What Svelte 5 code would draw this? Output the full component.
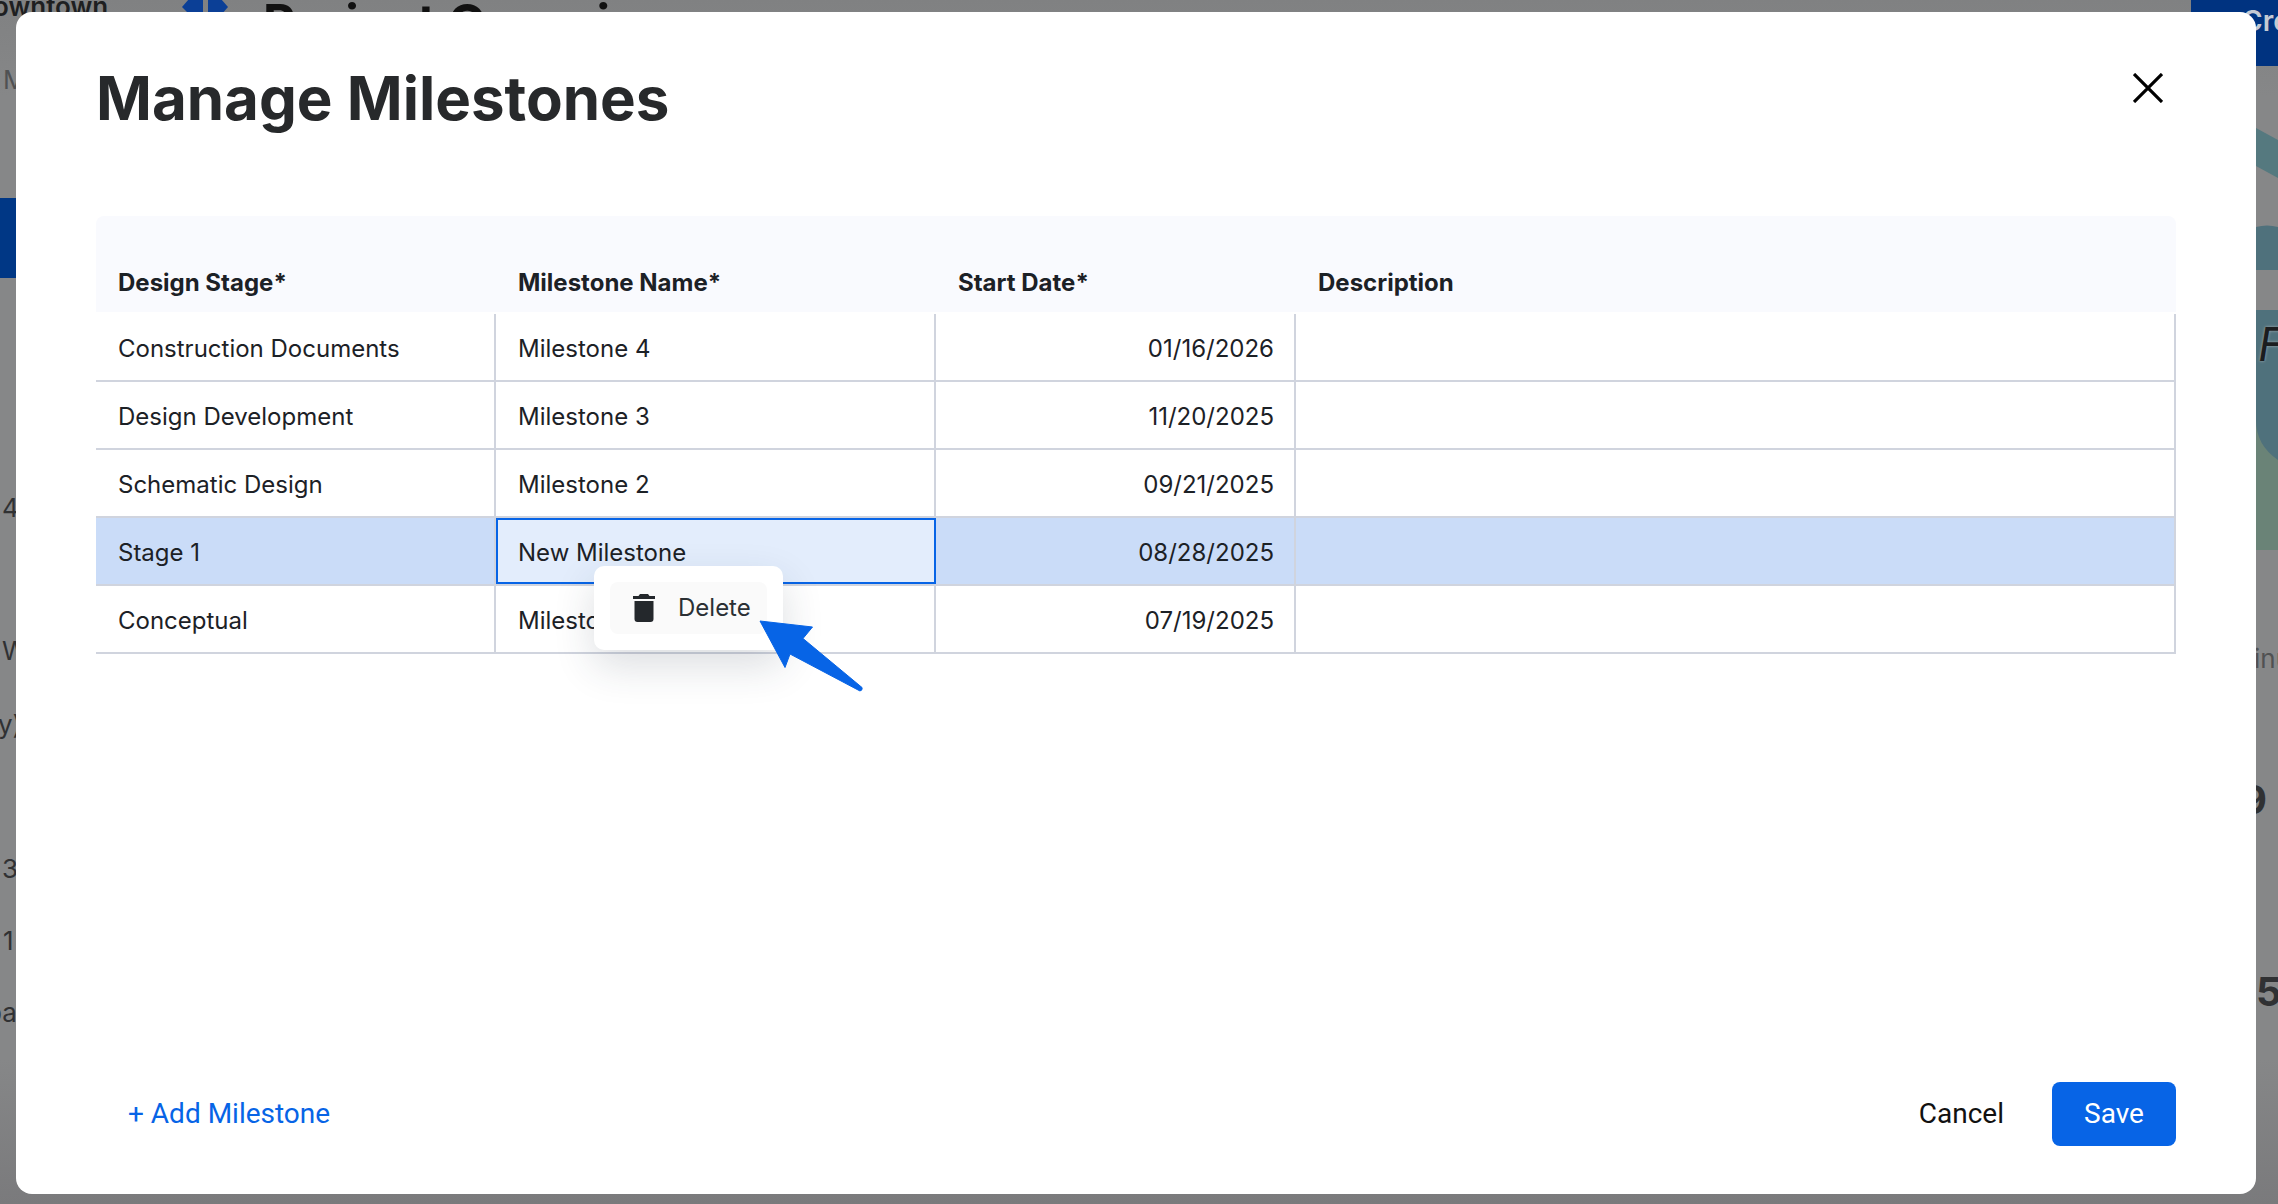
<script>
	const rows = [
		{ stage: "Construction Documents", name: "Milestone 4", date: "01/16/2026" },
		{ stage: "Design Development", name: "Milestone 3", date: "11/20/2025" },
		{ stage: "Schematic Design", name: "Milestone 2", date: "09/21/2025" },
		{ stage: "Stage 1", name: "New Milestone", date: "08/28/2025", selected: true },
		{ stage: "Conceptual", name: "Milestone 1", date: "07/19/2025" },
	];
</script>

<div class="page">
	<!-- the page behind the dimmed overlay, only slivers of it show -->
	<div class="behind">
		<span class="frag town">owntown</span>
		<svg class="logo" viewBox="0 0 46 16" width="46" height="16">
			<path d="M7 0h14v16H8L0 8z" fill="#0b3f96" />
			<path d="M26 0h13l7 8-7 8H26z" fill="#0b3f96" />
		</svg>
		<span class="frag heading">Project Overview</span>
		<div class="navblue"></div>
		<div class="createblue"><span>Create</span></div>
		<svg class="map" viewBox="0 0 22 430" width="22" height="430">
			<path d="M0 8L22 20V58L0 46z" fill="#55797f" />
			<path d="M0 107Q11 104 22 107V150H0z" fill="#4f717c" />
			<path d="M0 190H22V430H0z" fill="#4f717c" />
			<path d="M0 300Q0 325 22 340V430H0z" fill="#6a8377" />
		</svg>
		<span class="frag l1">M</span>
		<span class="frag l2">4</span>
		<span class="frag l3">W</span>
		<span class="frag l4">y)</span>
		<span class="frag l5">3</span>
		<span class="frag l6">1</span>
		<span class="frag l7">pa</span>
		<span class="frag r1">inu</span>
		<span class="frag r2">9</span>
		<span class="frag r3">5,</span>
		<span class="frag r4">F</span>
	</div>

	<div class="modal">
		<header>
			<h1>Manage Milestones</h1>
			<button class="close" aria-label="Close">
				<svg viewBox="0 0 30 30" width="30" height="30"><path d="M1 1l28 28M29 1L1 29" stroke="#000" stroke-width="3.2" fill="none" /></svg>
			</button>
		</header>

		<div class="table">
			<div class="row head">
				<div class="cell">Design Stage*</div>
				<div class="cell">Milestone Name*</div>
				<div class="cell">Start Date*</div>
				<div class="cell">Description</div>
			</div>
			<div class="body">
				{#each rows as row (row.stage)}
					<div class="row" class:selected={row.selected}>
						<div class="cell">{row.stage}</div>
						<div class="cell" class:active={row.selected}>{row.name}</div>
						<div class="cell date">{row.date}</div>
						<div class="cell"></div>
					</div>
				{/each}
			</div>

			<div class="menu">
				<div class="item">
					<svg viewBox="0 0 22 28" width="22" height="28">
						<path d="M7 0h8l1.500 2H22v3H0V2h5.500zM1.500 7h19v18a3 3 0 0 1-3 3h-13a3 3 0 0 1-3-3z" fill="#24282c" />
					</svg>
					<span>Delete</span>
				</div>
			</div>
			<svg class="arrow" viewBox="0 0 104 72" width="104" height="72">
				<path d="M1 1L53.500 7L44 18.500L103 67.500Q104 70 101 71L31 34L26 47.500z" fill="#0764e6" stroke="#0764e6" stroke-width="1" stroke-linejoin="round" />
			</svg>
		</div>

		<footer>
			<button class="add">+ Add Milestone</button>
			<div class="actions">
				<button class="cancel">Cancel</button>
				<button class="save">Save</button>
			</div>
		</footer>
	</div>
</div>

<style>
	:global(body) {
		margin: 0;
		background: #838485;
		overflow: hidden;
	}

	.page {
		position: relative;
		width: 2278px;
		height: 1204px;
		overflow: hidden;
		font-family: Inter, sans-serif;
		color: #1c2126;
	}

	.behind {
		position: absolute;
		inset: 0;
		background: linear-gradient(#808182, #868788 8%, #868788 88%, #7a7a7c);
	}
	.frag {
		position: absolute;
		font-size: 26px;
		line-height: 28px;
		color: #303133;
		white-space: nowrap;
	}
	.town { left: -7px; top: -7px; font-weight: 600; color: #1e1f21; }
	.logo { position: absolute; left: 182px; top: -1px; }
	.heading { left: 263px; top: -6px; font-size: 50px; line-height: 56px; font-weight: 700; color: #111; }
	.navblue { position: absolute; left: 0; top: 198px; width: 16px; height: 80px; background: #003785; }
	.createblue {
		position: absolute;
		left: 2191px;
		top: 0;
		width: 87px;
		height: 66px;
		background: #003380;
		color: #c4cad4;
		font-size: 28px;
		font-weight: 600;
		padding: 4px 0 0 51px;
		box-sizing: border-box;
		white-space: nowrap;
		overflow: hidden;
	}
	.map { position: absolute; left: 2256px; top: 120px; }
	.l1 { left: 3px; top: 66px; color: #505153; }
	.l2 { left: 2px; top: 494px; }
	.l3 { left: 2px; top: 637px; }
	.l4 { left: -2px; top: 711px; }
	.l5 { left: 2px; top: 855px; }
	.l6 { left: 3px; top: 927px; }
	.l7 { left: -14px; top: 999px; }
	.r1 { left: 2254px; top: 645px; color: #505153; }
	.r2 { left: 2241px; top: 780px; font-size: 40px; line-height: 40px; font-weight: 700; }
	.r3 { left: 2256px; top: 972px; font-size: 40px; line-height: 40px; font-weight: 700; }
	.r4 {
		left: 2258px;
		top: 324px;
		font-size: 46px;
		line-height: 40px;
		font-style: italic;
		color: #1b1d1f;
		text-shadow: 0 0 3px #a9b0b4;
	}

	.modal {
		position: absolute;
		left: 16px;
		top: 12px;
		width: 2240px;
		height: 1182px;
		box-sizing: border-box;
		background: #fff;
		border-radius: 16px;
		padding: 0 80px;
		display: flex;
		flex-direction: column;
	}

	header {
		height: 204px;
		flex: none;
		position: relative;
	}
	h1 {
		margin: 0;
		padding-top: 48px;
		font-size: 60px;
		line-height: 76px;
		font-weight: 700;
		color: #27292b;
	}
	button {
		border: 0;
		background: none;
		padding: 0;
		cursor: pointer;
		font-family: Roboto, sans-serif;
		font-size: 28px;
	}
	.close {
		position: absolute;
		right: 13px;
		top: 61px;
		width: 30px;
		height: 30px;
	}
	.close svg { display: block; }

	.table {
		position: relative;
		flex: none;
	}
	.body { padding-top: 2px; }
	.row {
		display: grid;
		grid-template-columns: 400px 440px 360px 880px;
		height: 68px;
		box-sizing: border-box;
		border-bottom: 2px solid #d0d4de;
		font-size: 24px;
	}
	.row.head {
		height: 96px;
		background: #f9fafe;
		border: 0;
		border-radius: 8px 8px 0 0;
		font-weight: 700;
		color: #1c2126;
	}
	.row.selected { background: #cadcf8; }
	.cell {
		display: flex;
		align-items: center;
		padding: 2px 22px 0;
		border-right: 2px solid #d0d4de;
		box-sizing: border-box;
	}
	.head .cell {
		border: 0;
		padding: 36px 22px 0;
	}
	.row .cell:first-child { padding-left: 22px; }
	.date { justify-content: flex-end; padding-right: 20px; }
	.cell.active {
		background: #e3edfc;
		outline: 2px solid #0764e6;
		outline-offset: -2px;
		border: 0;
	}

	.menu {
		position: absolute;
		left: 498px;
		top: 350px;
		width: 189px;
		height: 84px;
		box-sizing: border-box;
		padding: 16px;
		background: #fff;
		border-radius: 10px;
		box-shadow: 0 16px 40px rgba(40, 50, 70, 0.16);
	}
	.item {
		height: 52px;
		background: #fafafa;
		border-radius: 8px;
		display: flex;
		align-items: center;
		gap: 23px;
		padding-left: 23px;
		font-size: 24px;
		color: #2b3034;
	}
	.item span { padding-bottom: 2px; }
	.item svg { display: block; }
	.arrow {
		position: absolute;
		left: 663px;
		top: 404px;
	}

	footer {
		margin-top: auto;
		margin-bottom: 48px;
		height: 64px;
		display: flex;
		align-items: center;
		justify-content: space-between;
		flex: none;
	}
	.add {
		color: #0764e6;
		margin-left: 32px;
		margin-top: -2px;
	}
	.actions {
		display: flex;
		align-items: center;
		gap: 48px;
	}
	.cancel { color: #111; margin-top: -2px; }
	.save {
		width: 124px;
		height: 64px;
		padding-bottom: 2px;
		background: #0764e6;
		color: #fff;
		border-radius: 8px;
	}
</style>
